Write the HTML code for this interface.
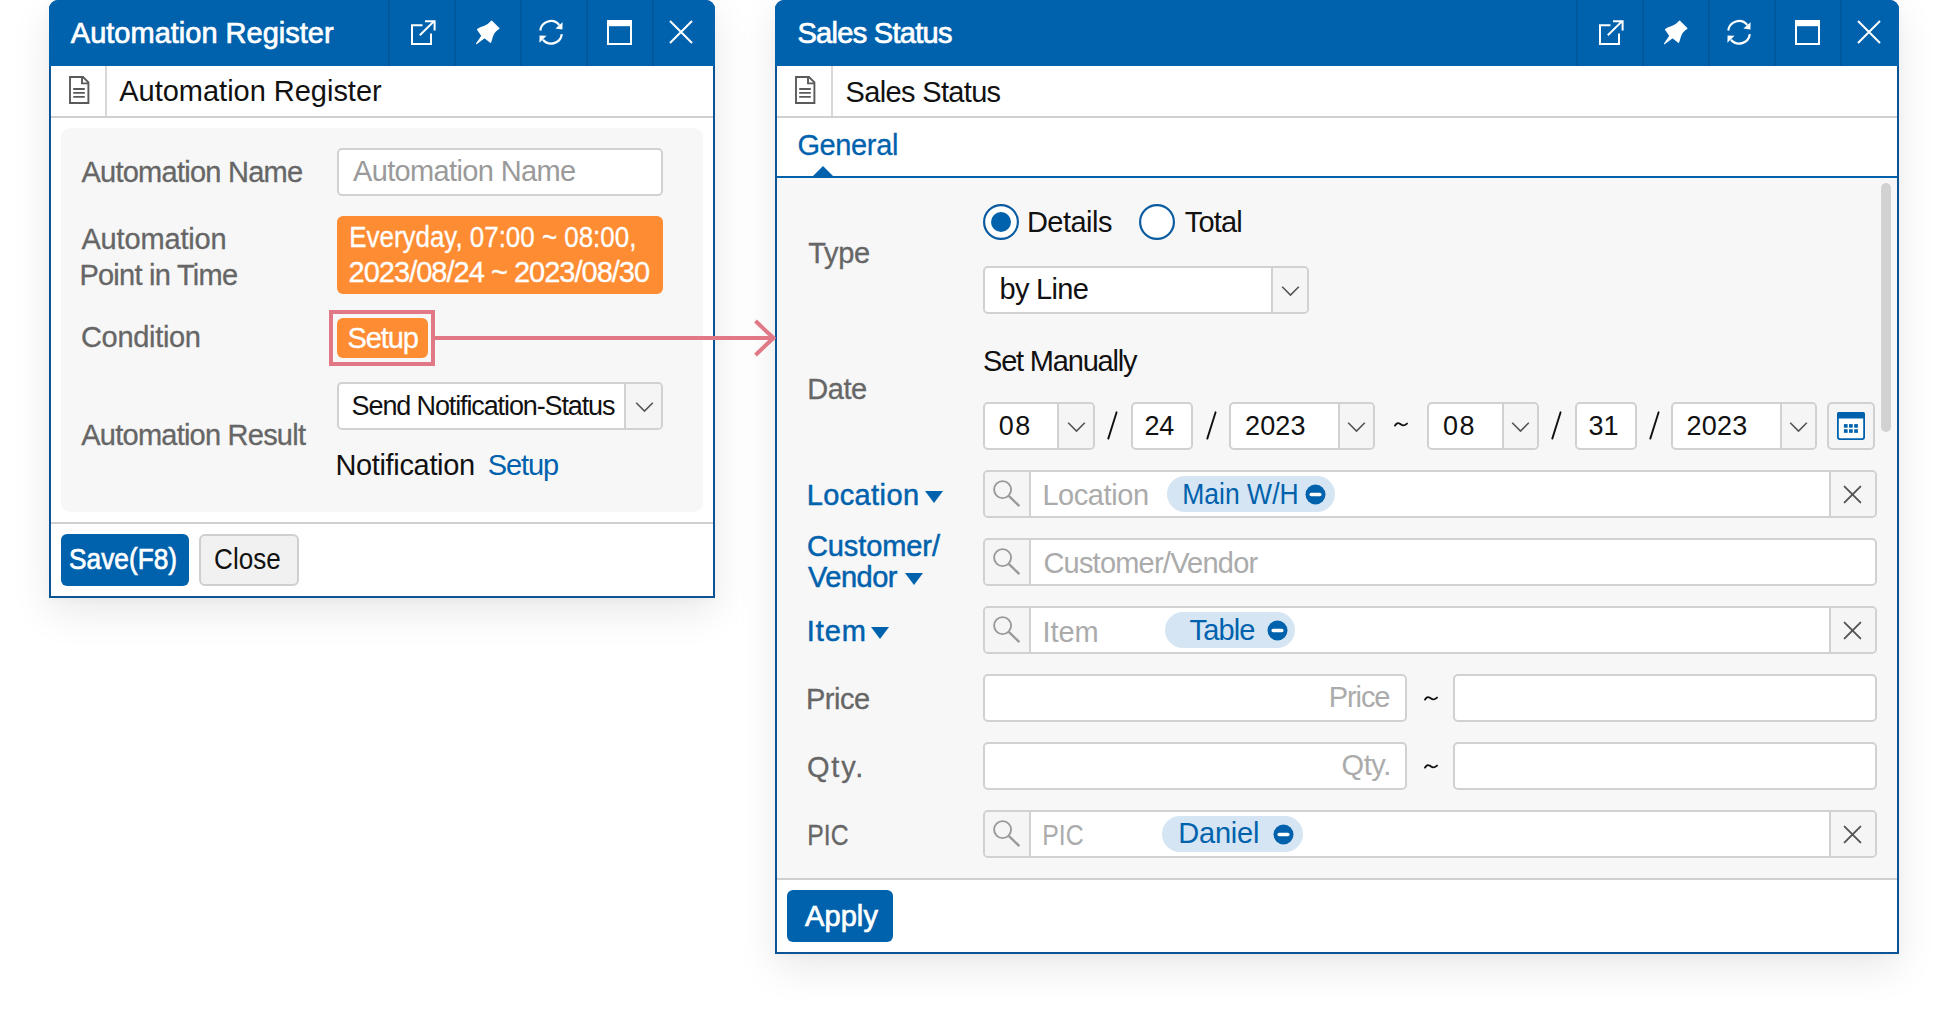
<!DOCTYPE html>
<html><head><meta charset="utf-8"><style>
html,body{margin:0;padding:0}
body{width:1948px;height:1013px;position:relative;overflow:hidden;background:#fff;font-family:"Liberation Sans",sans-serif;white-space:pre}
svg{display:block}
</style></head><body>
<div style="position:absolute;left:49px;top:0px;width:666px;height:598px;box-shadow:0 14px 40px rgba(0,0,0,0.09), 0 2px 8px rgba(0,0,0,0.03);border-radius:9px 9px 0 0"></div>
<div style="position:absolute;left:49px;top:0px;width:666px;height:598px;background:#fff;border:2px solid #0b5594;box-sizing:border-box;border-radius:9px 9px 0 0"></div>
<div style="position:absolute;left:49px;top:0px;width:666px;height:66px;background:#0062ad;border-radius:9px 9px 0 0"></div>
<div style="position:absolute;left:388px;top:0px;width:2px;height:66px;background:#00589c"></div>
<div style="position:absolute;left:454px;top:0px;width:2px;height:66px;background:#00589c"></div>
<div style="position:absolute;left:520px;top:0px;width:2px;height:66px;background:#00589c"></div>
<div style="position:absolute;left:586px;top:0px;width:2px;height:66px;background:#00589c"></div>
<div style="position:absolute;left:652px;top:0px;width:2px;height:66px;background:#00589c"></div>
<svg style="position:absolute;left:410.5px;top:19.5px;" width="25" height="25" viewBox="0 0 25 25"><path d="M11.5 5.3H1v18.7h19V13.5" fill="none" stroke="#fff" stroke-width="2"/><path d="M8.8 15.2L23.4 0.9M14 1.2h9.6v9.4" fill="none" stroke="#fff" stroke-width="2"/></svg>
<svg style="position:absolute;left:475px;top:19.5px;" width="25" height="25" viewBox="0 0 25 25"><path d="M16.6 1.1 L23.9 8.4 C20.6 10.2 18.4 13 17.4 16.2 C16.7 18.4 16.2 20.6 15.5 22.4 L9.6 17.6 L1.6 23.6 L7 15.8 L2.5 9.4 C4.6 8.2 6.6 7.4 9 6.6 C12 5.6 14.6 3.6 16.6 1.1 Z" fill="#fff" stroke="#fff" stroke-width="1.2" stroke-linejoin="round"/></svg>
<svg style="position:absolute;left:538px;top:19px;" width="26" height="26" viewBox="0 0 26 26"><path d="M2.3 11.5A10.7 10.7 0 0 1 21.2 6.0" fill="none" stroke="#fff" stroke-width="2.2"/><path d="M24.6 3.2 L24.4 10.4 L17.4 9.6 Z" fill="#fff"/><path d="M23.8 15.2A10.7 10.7 0 0 1 5.0 20.8" fill="none" stroke="#fff" stroke-width="2.2"/><path d="M1.4 23.8 L1.6 16.4 L8.6 16.8 Z" fill="#fff"/></svg>
<svg style="position:absolute;left:607px;top:19.5px;" width="25" height="25" viewBox="0 0 25 25"><path d="M1 1h23v23H1z" fill="none" stroke="#fff" stroke-width="2"/><rect x="0" y="0" width="25" height="6.2" fill="#fff"/></svg>
<svg style="position:absolute;left:669px;top:20px;" width="24" height="24" viewBox="0 0 24 24"><path d="M1 1L23 23M23 1L1 23" fill="none" stroke="#fff" stroke-width="2"/></svg>
<div style="position:absolute;left:51px;top:116px;width:662px;height:2px;background:#d0d0d0"></div>
<div style="position:absolute;left:105px;top:66px;width:2px;height:50px;background:#d8d8d8"></div>
<svg style="position:absolute;left:68.5px;top:76px;" width="21" height="28" viewBox="0 0 21 28"><path d="M1 1H14L19.4 6.4V27H1Z" fill="#fff" stroke="#5a5a5a" stroke-width="1.9"/><path d="M13 1V7.4H19.4" fill="none" stroke="#5a5a5a" stroke-width="1.9"/><path d="M4.2 13h11.6M4.2 16.9h11.6M4.2 20.9h11.6" stroke="#5a5a5a" stroke-width="1.8"/></svg>
<div style="position:absolute;left:61px;top:128px;width:642px;height:384px;background:#f7f7f7;border-radius:9px"></div>
<div style="position:absolute;left:51px;top:522px;width:662px;height:2px;background:#d0d0d0"></div>
<div style="position:absolute;left:337px;top:148px;width:326px;height:48px;background:#fff;border:2px solid #d1d1d1;box-sizing:border-box;border-radius:5px"></div>
<div style="position:absolute;left:337px;top:216px;width:326px;height:78px;background:#fe8c33;border-radius:6px"></div>
<div style="position:absolute;left:329px;top:310px;width:106px;height:56px;border:4px solid #e07985;box-sizing:border-box"></div>
<div style="position:absolute;left:337px;top:318px;width:91px;height:40px;background:#fe8c33;border-radius:6px"></div>
<div style="position:absolute;left:337px;top:382px;width:326px;height:48px;background:#fff;border:2px solid #d1d1d1;box-sizing:border-box;border-radius:5px"></div>
<div style="position:absolute;left:626px;top:384px;width:35px;height:44px;background:#f5f5f5;border-radius:0 4px 4px 0"></div>
<div style="position:absolute;left:624px;top:384px;width:2px;height:44px;background:#d1d1d1"></div>
<svg style="position:absolute;left:634.5px;top:401px;" width="19" height="12" viewBox="0 0 19 12"><path d="M1.2 1.8L9.5 10.1L17.8 1.8" fill="none" stroke="#555" stroke-width="1.6"/></svg>
<div style="position:absolute;left:61px;top:534px;width:128px;height:52px;background:#0062ad;border-radius:6px"></div>
<div style="position:absolute;left:199px;top:534px;width:100px;height:52px;background:#f1f1f1;border:2px solid #cfcfcf;box-sizing:border-box;border-radius:6px"></div>
<div style="position:absolute;left:775px;top:0px;width:1124px;height:954px;box-shadow:0 14px 40px rgba(0,0,0,0.09), 0 2px 8px rgba(0,0,0,0.03);border-radius:9px 9px 0 0"></div>
<div style="position:absolute;left:775px;top:0px;width:1124px;height:954px;background:#fff;border:2px solid #0b5594;box-sizing:border-box;border-radius:9px 9px 0 0"></div>
<div style="position:absolute;left:775px;top:0px;width:1124px;height:66px;background:#0062ad;border-radius:9px 9px 0 0"></div>
<div style="position:absolute;left:1576px;top:0px;width:2px;height:66px;background:#00589c"></div>
<div style="position:absolute;left:1642px;top:0px;width:2px;height:66px;background:#00589c"></div>
<div style="position:absolute;left:1708px;top:0px;width:2px;height:66px;background:#00589c"></div>
<div style="position:absolute;left:1774px;top:0px;width:2px;height:66px;background:#00589c"></div>
<div style="position:absolute;left:1840px;top:0px;width:2px;height:66px;background:#00589c"></div>
<svg style="position:absolute;left:1598.5px;top:19.5px;" width="25" height="25" viewBox="0 0 25 25"><path d="M11.5 5.3H1v18.7h19V13.5" fill="none" stroke="#fff" stroke-width="2"/><path d="M8.8 15.2L23.4 0.9M14 1.2h9.6v9.4" fill="none" stroke="#fff" stroke-width="2"/></svg>
<svg style="position:absolute;left:1662.5px;top:19.5px;" width="25" height="25" viewBox="0 0 25 25"><path d="M16.6 1.1 L23.9 8.4 C20.6 10.2 18.4 13 17.4 16.2 C16.7 18.4 16.2 20.6 15.5 22.4 L9.6 17.6 L1.6 23.6 L7 15.8 L2.5 9.4 C4.6 8.2 6.6 7.4 9 6.6 C12 5.6 14.6 3.6 16.6 1.1 Z" fill="#fff" stroke="#fff" stroke-width="1.2" stroke-linejoin="round"/></svg>
<svg style="position:absolute;left:1726px;top:19px;" width="26" height="26" viewBox="0 0 26 26"><path d="M2.3 11.5A10.7 10.7 0 0 1 21.2 6.0" fill="none" stroke="#fff" stroke-width="2.2"/><path d="M24.6 3.2 L24.4 10.4 L17.4 9.6 Z" fill="#fff"/><path d="M23.8 15.2A10.7 10.7 0 0 1 5.0 20.8" fill="none" stroke="#fff" stroke-width="2.2"/><path d="M1.4 23.8 L1.6 16.4 L8.6 16.8 Z" fill="#fff"/></svg>
<svg style="position:absolute;left:1795px;top:19.5px;" width="25" height="25" viewBox="0 0 25 25"><path d="M1 1h23v23H1z" fill="none" stroke="#fff" stroke-width="2"/><rect x="0" y="0" width="25" height="6.2" fill="#fff"/></svg>
<svg style="position:absolute;left:1856.5px;top:20px;" width="24" height="24" viewBox="0 0 24 24"><path d="M1 1L23 23M23 1L1 23" fill="none" stroke="#fff" stroke-width="2"/></svg>
<div style="position:absolute;left:777px;top:116px;width:1120px;height:2px;background:#d0d0d0"></div>
<div style="position:absolute;left:831px;top:66px;width:2px;height:50px;background:#d8d8d8"></div>
<svg style="position:absolute;left:794.5px;top:76px;" width="21" height="28" viewBox="0 0 21 28"><path d="M1 1H14L19.4 6.4V27H1Z" fill="#fff" stroke="#5a5a5a" stroke-width="1.9"/><path d="M13 1V7.4H19.4" fill="none" stroke="#5a5a5a" stroke-width="1.9"/><path d="M4.2 13h11.6M4.2 16.9h11.6M4.2 20.9h11.6" stroke="#5a5a5a" stroke-width="1.8"/></svg>
<div style="position:absolute;left:777px;top:178px;width:1120px;height:700px;background:#f7f7f7"></div>
<div style="position:absolute;left:777px;top:176px;width:1120px;height:2px;background:#0062ad"></div>
<svg style="position:absolute;left:812px;top:166px;" width="22" height="11" viewBox="0 0 22 11"><path d="M0 11L11 0L22 11Z" fill="#0062ad"/></svg>
<div style="position:absolute;left:1881px;top:183px;width:10px;height:249px;background:#d2d2d2;border-radius:5px"></div>
<div style="position:absolute;left:777px;top:878px;width:1120px;height:2px;background:#d0d0d0"></div>
<div style="position:absolute;left:787px;top:890px;width:106px;height:52px;background:#0062ad;border-radius:6px"></div>
<svg style="position:absolute;left:983px;top:204px;" width="36" height="36" viewBox="0 0 36 36"><circle cx="18" cy="18" r="16.9" fill="#fff" stroke="#0a5ba0" stroke-width="2.2"/><circle cx="18" cy="18" r="10" fill="#0062ad"/></svg>
<svg style="position:absolute;left:1139px;top:204px;" width="36" height="36" viewBox="0 0 36 36"><circle cx="18" cy="18" r="16.9" fill="#fff" stroke="#0a5ba0" stroke-width="2.2"/></svg>
<div style="position:absolute;left:983px;top:266px;width:326px;height:48px;background:#fff;border:2px solid #d1d1d1;box-sizing:border-box;border-radius:5px"></div>
<div style="position:absolute;left:1273px;top:268px;width:34px;height:44px;background:#f5f5f5;border-radius:0 4px 4px 0"></div>
<div style="position:absolute;left:1271px;top:268px;width:2px;height:44px;background:#d1d1d1"></div>
<svg style="position:absolute;left:1280.5px;top:285.0px;" width="19" height="12" viewBox="0 0 19 12"><path d="M1.2 1.8L9.5 10.1L17.8 1.8" fill="none" stroke="#555" stroke-width="1.6"/></svg>
<div style="position:absolute;left:983px;top:402px;width:112px;height:48px;background:#fff;border:2px solid #d1d1d1;box-sizing:border-box;border-radius:5px"></div>
<div style="position:absolute;left:1059px;top:404px;width:34px;height:44px;background:#f5f5f5;border-radius:0 4px 4px 0"></div>
<div style="position:absolute;left:1057px;top:404px;width:2px;height:44px;background:#d1d1d1"></div>
<svg style="position:absolute;left:1066.5px;top:421.0px;" width="19" height="12" viewBox="0 0 19 12"><path d="M1.2 1.8L9.5 10.1L17.8 1.8" fill="none" stroke="#555" stroke-width="1.6"/></svg>
<div style="position:absolute;left:1131px;top:402px;width:62px;height:48px;background:#fff;border:2px solid #d1d1d1;box-sizing:border-box;border-radius:5px"></div>
<div style="position:absolute;left:1229px;top:402px;width:146px;height:48px;background:#fff;border:2px solid #d1d1d1;box-sizing:border-box;border-radius:5px"></div>
<div style="position:absolute;left:1340px;top:404px;width:33px;height:44px;background:#f5f5f5;border-radius:0 4px 4px 0"></div>
<div style="position:absolute;left:1338px;top:404px;width:2px;height:44px;background:#d1d1d1"></div>
<svg style="position:absolute;left:1347.0px;top:421.0px;" width="19" height="12" viewBox="0 0 19 12"><path d="M1.2 1.8L9.5 10.1L17.8 1.8" fill="none" stroke="#555" stroke-width="1.6"/></svg>
<div style="position:absolute;left:1427px;top:402px;width:112px;height:48px;background:#fff;border:2px solid #d1d1d1;box-sizing:border-box;border-radius:5px"></div>
<div style="position:absolute;left:1504px;top:404px;width:33px;height:44px;background:#f5f5f5;border-radius:0 4px 4px 0"></div>
<div style="position:absolute;left:1502px;top:404px;width:2px;height:44px;background:#d1d1d1"></div>
<svg style="position:absolute;left:1511.0px;top:421.0px;" width="19" height="12" viewBox="0 0 19 12"><path d="M1.2 1.8L9.5 10.1L17.8 1.8" fill="none" stroke="#555" stroke-width="1.6"/></svg>
<div style="position:absolute;left:1575px;top:402px;width:62px;height:48px;background:#fff;border:2px solid #d1d1d1;box-sizing:border-box;border-radius:5px"></div>
<div style="position:absolute;left:1671px;top:402px;width:146px;height:48px;background:#fff;border:2px solid #d1d1d1;box-sizing:border-box;border-radius:5px"></div>
<div style="position:absolute;left:1782px;top:404px;width:33px;height:44px;background:#f5f5f5;border-radius:0 4px 4px 0"></div>
<div style="position:absolute;left:1780px;top:404px;width:2px;height:44px;background:#d1d1d1"></div>
<svg style="position:absolute;left:1789.0px;top:421.0px;" width="19" height="12" viewBox="0 0 19 12"><path d="M1.2 1.8L9.5 10.1L17.8 1.8" fill="none" stroke="#555" stroke-width="1.6"/></svg>
<div style="position:absolute;left:1827px;top:402px;width:48px;height:48px;background:#f5f5f5;border:2px solid #d1d1d1;box-sizing:border-box;border-radius:5px"></div>
<svg style="position:absolute;left:1837px;top:412px;" width="28" height="28" viewBox="0 0 28 28"><rect x="0.9" y="0.9" width="26.2" height="26.2" rx="2" fill="#fff" stroke="#0062ad" stroke-width="1.8"/><rect x="0" y="0" width="28" height="6.6" rx="2" fill="#0062ad"/><rect x="6.9" y="12.1" width="3.7" height="3.6" fill="#0062ad"/><rect x="6.9" y="17.25" width="3.7" height="3.6" fill="#0062ad"/><rect x="12.05" y="12.1" width="3.7" height="3.6" fill="#0062ad"/><rect x="12.05" y="17.25" width="3.7" height="3.6" fill="#0062ad"/><rect x="17.200000000000003" y="12.1" width="3.7" height="3.6" fill="#0062ad"/><rect x="17.200000000000003" y="17.25" width="3.7" height="3.6" fill="#0062ad"/></svg>
<div style="position:absolute;left:983px;top:470px;width:894px;height:48px;background:#fff;border:2px solid #d1d1d1;box-sizing:border-box;border-radius:5px"></div>
<div style="position:absolute;left:985px;top:472px;width:44px;height:44px;background:#f5f5f5;border-radius:4px 0 0 4px"></div>
<div style="position:absolute;left:1029px;top:472px;width:2px;height:44px;background:#d1d1d1"></div>
<svg style="position:absolute;left:993px;top:480px;" width="30" height="30" viewBox="0 0 30 30"><circle cx="9.6" cy="9.6" r="8.5" fill="none" stroke="#9a9a9a" stroke-width="1.9"/><path d="M15.8 15.8L26.4 26.2" stroke="#9a9a9a" stroke-width="2.4"/></svg>
<div style="position:absolute;left:1831px;top:472px;width:44px;height:44px;background:#f5f5f5;border-radius:0 4px 4px 0"></div>
<div style="position:absolute;left:1829px;top:472px;width:2px;height:44px;background:#d1d1d1"></div>
<svg style="position:absolute;left:1842.5px;top:485.0px;" width="19" height="19" viewBox="0 0 19 19"><path d="M1.6 1.6L17.4 17.4M17.4 1.6L1.6 17.4" stroke="#555" stroke-width="1.9" stroke-linecap="round"/></svg>
<div style="position:absolute;left:1166.5px;top:476px;width:168.5px;height:36px;background:#d5e5f3;border-radius:20px"></div>
<svg style="position:absolute;left:1304.5px;top:483.5px;" width="21" height="21" viewBox="0 0 21 21"><circle cx="10.5" cy="10.5" r="10" fill="#0062ad"/><path d="M6.1 10.5H14.9" stroke="#fff" stroke-width="3.3" stroke-linecap="round"/></svg>
<div style="position:absolute;left:983px;top:538px;width:894px;height:48px;background:#fff;border:2px solid #d1d1d1;box-sizing:border-box;border-radius:5px"></div>
<div style="position:absolute;left:985px;top:540px;width:44px;height:44px;background:#f5f5f5;border-radius:4px 0 0 4px"></div>
<div style="position:absolute;left:1029px;top:540px;width:2px;height:44px;background:#d1d1d1"></div>
<svg style="position:absolute;left:993px;top:548px;" width="30" height="30" viewBox="0 0 30 30"><circle cx="9.6" cy="9.6" r="8.5" fill="none" stroke="#9a9a9a" stroke-width="1.9"/><path d="M15.8 15.8L26.4 26.2" stroke="#9a9a9a" stroke-width="2.4"/></svg>
<div style="position:absolute;left:983px;top:606px;width:894px;height:48px;background:#fff;border:2px solid #d1d1d1;box-sizing:border-box;border-radius:5px"></div>
<div style="position:absolute;left:985px;top:608px;width:44px;height:44px;background:#f5f5f5;border-radius:4px 0 0 4px"></div>
<div style="position:absolute;left:1029px;top:608px;width:2px;height:44px;background:#d1d1d1"></div>
<svg style="position:absolute;left:993px;top:616px;" width="30" height="30" viewBox="0 0 30 30"><circle cx="9.6" cy="9.6" r="8.5" fill="none" stroke="#9a9a9a" stroke-width="1.9"/><path d="M15.8 15.8L26.4 26.2" stroke="#9a9a9a" stroke-width="2.4"/></svg>
<div style="position:absolute;left:1831px;top:608px;width:44px;height:44px;background:#f5f5f5;border-radius:0 4px 4px 0"></div>
<div style="position:absolute;left:1829px;top:608px;width:2px;height:44px;background:#d1d1d1"></div>
<svg style="position:absolute;left:1842.5px;top:621.0px;" width="19" height="19" viewBox="0 0 19 19"><path d="M1.6 1.6L17.4 17.4M17.4 1.6L1.6 17.4" stroke="#555" stroke-width="1.9" stroke-linecap="round"/></svg>
<div style="position:absolute;left:1165px;top:612px;width:129.5px;height:36px;background:#d5e5f3;border-radius:20px"></div>
<svg style="position:absolute;left:1266.5px;top:619.5px;" width="21" height="21" viewBox="0 0 21 21"><circle cx="10.5" cy="10.5" r="10" fill="#0062ad"/><path d="M6.1 10.5H14.9" stroke="#fff" stroke-width="3.3" stroke-linecap="round"/></svg>
<div style="position:absolute;left:983px;top:674px;width:424px;height:48px;background:#fff;border:2px solid #d1d1d1;box-sizing:border-box;border-radius:5px"></div>
<div style="position:absolute;left:1453px;top:674px;width:424px;height:48px;background:#fff;border:2px solid #d1d1d1;box-sizing:border-box;border-radius:5px"></div>
<div style="position:absolute;left:983px;top:742px;width:424px;height:48px;background:#fff;border:2px solid #d1d1d1;box-sizing:border-box;border-radius:5px"></div>
<div style="position:absolute;left:1453px;top:742px;width:424px;height:48px;background:#fff;border:2px solid #d1d1d1;box-sizing:border-box;border-radius:5px"></div>
<div style="position:absolute;left:983px;top:810px;width:894px;height:48px;background:#fff;border:2px solid #d1d1d1;box-sizing:border-box;border-radius:5px"></div>
<div style="position:absolute;left:985px;top:812px;width:44px;height:44px;background:#f5f5f5;border-radius:4px 0 0 4px"></div>
<div style="position:absolute;left:1029px;top:812px;width:2px;height:44px;background:#d1d1d1"></div>
<svg style="position:absolute;left:993px;top:820px;" width="30" height="30" viewBox="0 0 30 30"><circle cx="9.6" cy="9.6" r="8.5" fill="none" stroke="#9a9a9a" stroke-width="1.9"/><path d="M15.8 15.8L26.4 26.2" stroke="#9a9a9a" stroke-width="2.4"/></svg>
<div style="position:absolute;left:1831px;top:812px;width:44px;height:44px;background:#f5f5f5;border-radius:0 4px 4px 0"></div>
<div style="position:absolute;left:1829px;top:812px;width:2px;height:44px;background:#d1d1d1"></div>
<svg style="position:absolute;left:1842.5px;top:825.0px;" width="19" height="19" viewBox="0 0 19 19"><path d="M1.6 1.6L17.4 17.4M17.4 1.6L1.6 17.4" stroke="#555" stroke-width="1.9" stroke-linecap="round"/></svg>
<div style="position:absolute;left:1161.5px;top:816px;width:141.0px;height:36px;background:#d5e5f3;border-radius:20px"></div>
<svg style="position:absolute;left:1273px;top:823.5px;" width="21" height="21" viewBox="0 0 21 21"><circle cx="10.5" cy="10.5" r="10" fill="#0062ad"/><path d="M6.1 10.5H14.9" stroke="#fff" stroke-width="3.3" stroke-linecap="round"/></svg>
<svg style="position:absolute;left:925px;top:491px;" width="18" height="12" viewBox="0 0 18 12"><path d="M0 0H18L9 12Z" fill="#0062ad"/></svg>
<svg style="position:absolute;left:905px;top:573px;" width="18" height="12" viewBox="0 0 18 12"><path d="M0 0H18L9 12Z" fill="#0062ad"/></svg>
<svg style="position:absolute;left:871px;top:627px;" width="18" height="12" viewBox="0 0 18 12"><path d="M0 0H18L9 12Z" fill="#0062ad"/></svg>
<svg style="position:absolute;left:1105px;top:408px;" width="14" height="34" viewBox="0 0 14 34"><path d="M3.3 30.6L11.6 4.3" stroke="#111" stroke-width="1.9" stroke-linecap="round"/></svg>
<svg style="position:absolute;left:1203.8px;top:408px;" width="14" height="34" viewBox="0 0 14 34"><path d="M3.3 30.6L11.6 4.3" stroke="#111" stroke-width="1.9" stroke-linecap="round"/></svg>
<svg style="position:absolute;left:1548.8px;top:408px;" width="14" height="34" viewBox="0 0 14 34"><path d="M3.3 30.6L11.6 4.3" stroke="#111" stroke-width="1.9" stroke-linecap="round"/></svg>
<svg style="position:absolute;left:1647px;top:408px;" width="14" height="34" viewBox="0 0 14 34"><path d="M3.3 30.6L11.6 4.3" stroke="#111" stroke-width="1.9" stroke-linecap="round"/></svg>
<svg style="position:absolute;left:1392.5px;top:418.5px;" width="16" height="10" viewBox="0 0 16 10"><path d="M2 6.6C3.2 4.2 4.9 3.4 6.9 4.8C8.9 6.3 10.6 7.6 14 4.6" fill="none" stroke="#111" stroke-width="1.9" stroke-linecap="round"/></svg>
<svg style="position:absolute;left:1423px;top:693px;" width="16" height="10" viewBox="0 0 16 10"><path d="M2 6.6C3.2 4.2 4.9 3.4 6.9 4.8C8.9 6.3 10.6 7.6 14 4.6" fill="none" stroke="#111" stroke-width="1.9" stroke-linecap="round"/></svg>
<svg style="position:absolute;left:1423px;top:761px;" width="16" height="10" viewBox="0 0 16 10"><path d="M2 6.6C3.2 4.2 4.9 3.4 6.9 4.8C8.9 6.3 10.6 7.6 14 4.6" fill="none" stroke="#111" stroke-width="1.9" stroke-linecap="round"/></svg>
<span style="position:absolute;left:70.80px;top:19.45px;font-size:29px;line-height:29px;color:#ffffff;letter-spacing:0.006px;-webkit-text-stroke:0.7px #ffffff;">Automation Register</span>
<span style="position:absolute;left:119.30px;top:77.25px;font-size:29px;line-height:29px;color:#111111;letter-spacing:-0.021px;">Automation Register</span>
<span style="position:absolute;left:81.40px;top:157.75px;font-size:29px;line-height:29px;color:#666666;letter-spacing:-0.742px;-webkit-text-stroke:0.3px #666666;">Automation Name</span>
<span style="position:absolute;left:81.40px;top:225.45px;font-size:29px;line-height:29px;color:#666666;letter-spacing:-0.152px;-webkit-text-stroke:0.3px #666666;">Automation</span>
<span style="position:absolute;left:79.40px;top:261.45px;font-size:29px;line-height:29px;color:#666666;letter-spacing:-0.744px;-webkit-text-stroke:0.3px #666666;">Point in Time</span>
<span style="position:absolute;left:81.00px;top:323.25px;font-size:29px;line-height:29px;color:#666666;letter-spacing:-0.325px;-webkit-text-stroke:0.3px #666666;">Condition</span>
<span style="position:absolute;left:81.30px;top:421.45px;font-size:29px;line-height:29px;color:#666666;letter-spacing:-0.769px;-webkit-text-stroke:0.3px #666666;">Automation Result</span>
<span style="position:absolute;left:353.00px;top:157.45px;font-size:29px;line-height:29px;color:#9a9a9a;letter-spacing:-0.642px;">Automation Name</span>
<span style="position:absolute;left:348.50px;top:223.45px;font-size:29px;line-height:29px;color:#ffffff;transform:scaleX(0.8942);transform-origin:2.00px 0;-webkit-text-stroke:0.3px #ffffff;">Everyday, 07:00 ~ 08:00,</span>
<span style="position:absolute;left:348.60px;top:257.75px;font-size:29px;line-height:29px;color:#ffffff;letter-spacing:-0.991px;-webkit-text-stroke:0.3px #ffffff;">2023/08/24 ~ 2023/08/30</span>
<span style="position:absolute;left:347.60px;top:323.85px;font-size:29px;line-height:29px;color:#ffffff;letter-spacing:-1.139px;-webkit-text-stroke:0.3px #ffffff;">Setup</span>
<span style="position:absolute;left:351.60px;top:392.64px;font-size:27px;line-height:27px;color:#111111;letter-spacing:-1.120px;">Send Notification-Status</span>
<span style="position:absolute;left:335.40px;top:451.15px;font-size:29px;line-height:29px;color:#111111;letter-spacing:-0.339px;">Notification</span>
<span style="position:absolute;left:487.80px;top:451.45px;font-size:29px;line-height:29px;color:#0062ad;letter-spacing:-1.114px;">Setup</span>
<span style="position:absolute;left:69.20px;top:545.25px;font-size:29px;line-height:29px;color:#ffffff;transform:scaleX(0.9057);transform-origin:1.00px 0;-webkit-text-stroke:0.7px #ffffff;">Save(F8)</span>
<span style="position:absolute;left:213.60px;top:545.25px;font-size:29px;line-height:29px;color:#111111;transform:scaleX(0.8984);transform-origin:1.00px 0;">Close</span>
<span style="position:absolute;left:797.40px;top:19.45px;font-size:29px;line-height:29px;color:#ffffff;letter-spacing:-0.701px;-webkit-text-stroke:0.7px #ffffff;">Sales Status</span>
<span style="position:absolute;left:845.60px;top:77.65px;font-size:29px;line-height:29px;color:#111111;letter-spacing:-0.665px;">Sales Status</span>
<span style="position:absolute;left:797.40px;top:131.05px;font-size:29px;line-height:29px;color:#0062ad;letter-spacing:-0.371px;-webkit-text-stroke:0.3px #0062ad;">General</span>
<span style="position:absolute;left:808.20px;top:239.25px;font-size:29px;line-height:29px;color:#666666;letter-spacing:-0.314px;-webkit-text-stroke:0.3px #666666;">Type</span>
<span style="position:absolute;left:1026.90px;top:207.65px;font-size:29px;line-height:29px;color:#111111;letter-spacing:-0.524px;">Details</span>
<span style="position:absolute;left:1184.70px;top:207.65px;font-size:29px;line-height:29px;color:#111111;letter-spacing:-0.803px;">Total</span>
<span style="position:absolute;left:999.50px;top:275.05px;font-size:29px;line-height:29px;color:#111111;letter-spacing:-0.698px;">by Line</span>
<span style="position:absolute;left:983.00px;top:346.85px;font-size:29px;line-height:29px;color:#111111;letter-spacing:-1.195px;">Set Manually</span>
<span style="position:absolute;left:807.30px;top:374.75px;font-size:29px;line-height:29px;color:#666666;letter-spacing:-0.476px;-webkit-text-stroke:0.3px #666666;">Date</span>
<span style="position:absolute;left:998.80px;top:413.04px;font-size:27px;line-height:27px;color:#111111;letter-spacing:1.384px;">08</span>
<span style="position:absolute;left:1144.50px;top:413.04px;font-size:27px;line-height:27px;color:#111111;letter-spacing:-0.316px;">24</span>
<span style="position:absolute;left:1245.00px;top:413.04px;font-size:27px;line-height:27px;color:#111111;letter-spacing:0.117px;">2023</span>
<span style="position:absolute;left:1443.00px;top:413.04px;font-size:27px;line-height:27px;color:#111111;letter-spacing:1.384px;">08</span>
<span style="position:absolute;left:1588.60px;top:413.04px;font-size:27px;line-height:27px;color:#111111;letter-spacing:-0.016px;">31</span>
<span style="position:absolute;left:1686.50px;top:413.04px;font-size:27px;line-height:27px;color:#111111;letter-spacing:0.251px;">2023</span>
<span style="position:absolute;left:806.70px;top:481.45px;font-size:29px;line-height:29px;color:#0062ad;letter-spacing:0.384px;-webkit-text-stroke:0.5px #0062ad;">Location</span>
<span style="position:absolute;left:807.00px;top:531.75px;font-size:29px;line-height:29px;color:#0062ad;letter-spacing:-0.100px;-webkit-text-stroke:0.5px #0062ad;">Customer/</span>
<span style="position:absolute;left:808.00px;top:563.35px;font-size:29px;line-height:29px;color:#0062ad;letter-spacing:-0.491px;-webkit-text-stroke:0.5px #0062ad;">Vendor</span>
<span style="position:absolute;left:806.70px;top:617.05px;font-size:29px;line-height:29px;color:#0062ad;letter-spacing:0.919px;-webkit-text-stroke:0.5px #0062ad;">Item</span>
<span style="position:absolute;left:806.00px;top:685.45px;font-size:29px;line-height:29px;color:#666666;letter-spacing:-0.486px;-webkit-text-stroke:0.3px #666666;">Price</span>
<span style="position:absolute;left:807.00px;top:752.95px;font-size:29px;line-height:29px;color:#666666;letter-spacing:1.779px;-webkit-text-stroke:0.3px #666666;">Qty.</span>
<span style="position:absolute;left:806.70px;top:821.05px;font-size:29px;line-height:29px;color:#666666;transform:scaleX(0.8546);transform-origin:2.00px 0;-webkit-text-stroke:0.3px #666666;">PIC</span>
<span style="position:absolute;left:1042.40px;top:481.45px;font-size:29px;line-height:29px;color:#ababab;letter-spacing:-0.431px;">Location</span>
<span style="position:absolute;left:1182.40px;top:480.05px;font-size:29px;line-height:29px;color:#0062ad;transform:scaleX(0.9153);transform-origin:2.00px 0;">Main W/H</span>
<span style="position:absolute;left:1043.40px;top:548.95px;font-size:29px;line-height:29px;color:#ababab;letter-spacing:-0.780px;">Customer/Vendor</span>
<span style="position:absolute;left:1042.40px;top:617.85px;font-size:29px;line-height:29px;color:#ababab;letter-spacing:-0.014px;">Item</span>
<span style="position:absolute;left:1189.50px;top:615.85px;font-size:29px;line-height:29px;color:#0062ad;letter-spacing:-0.875px;">Table</span>
<span style="position:absolute;left:1328.80px;top:683.15px;font-size:29px;line-height:29px;color:#ababab;letter-spacing:-1.111px;">Price</span>
<span style="position:absolute;left:1341.50px;top:750.95px;font-size:29px;line-height:29px;color:#ababab;letter-spacing:-0.387px;">Qty.</span>
<span style="position:absolute;left:1042.40px;top:821.05px;font-size:29px;line-height:29px;color:#ababab;transform:scaleX(0.8546);transform-origin:2.00px 0;">PIC</span>
<span style="position:absolute;left:1178.30px;top:819.05px;font-size:29px;line-height:29px;color:#0062ad;letter-spacing:-0.214px;">Daniel</span>
<span style="position:absolute;left:805.00px;top:901.85px;font-size:29px;line-height:29px;color:#ffffff;letter-spacing:0.089px;-webkit-text-stroke:0.7px #ffffff;">Apply</span>
<svg style="position:absolute;left:430px;top:318px;" width="350" height="42" viewBox="0 0 350 42"><path d="M5 20H343" stroke="#e07985" stroke-width="4"/><path d="M325.5 3L343.5 20L325.5 37" fill="none" stroke="#e07985" stroke-width="4"/></svg>
</body></html>
